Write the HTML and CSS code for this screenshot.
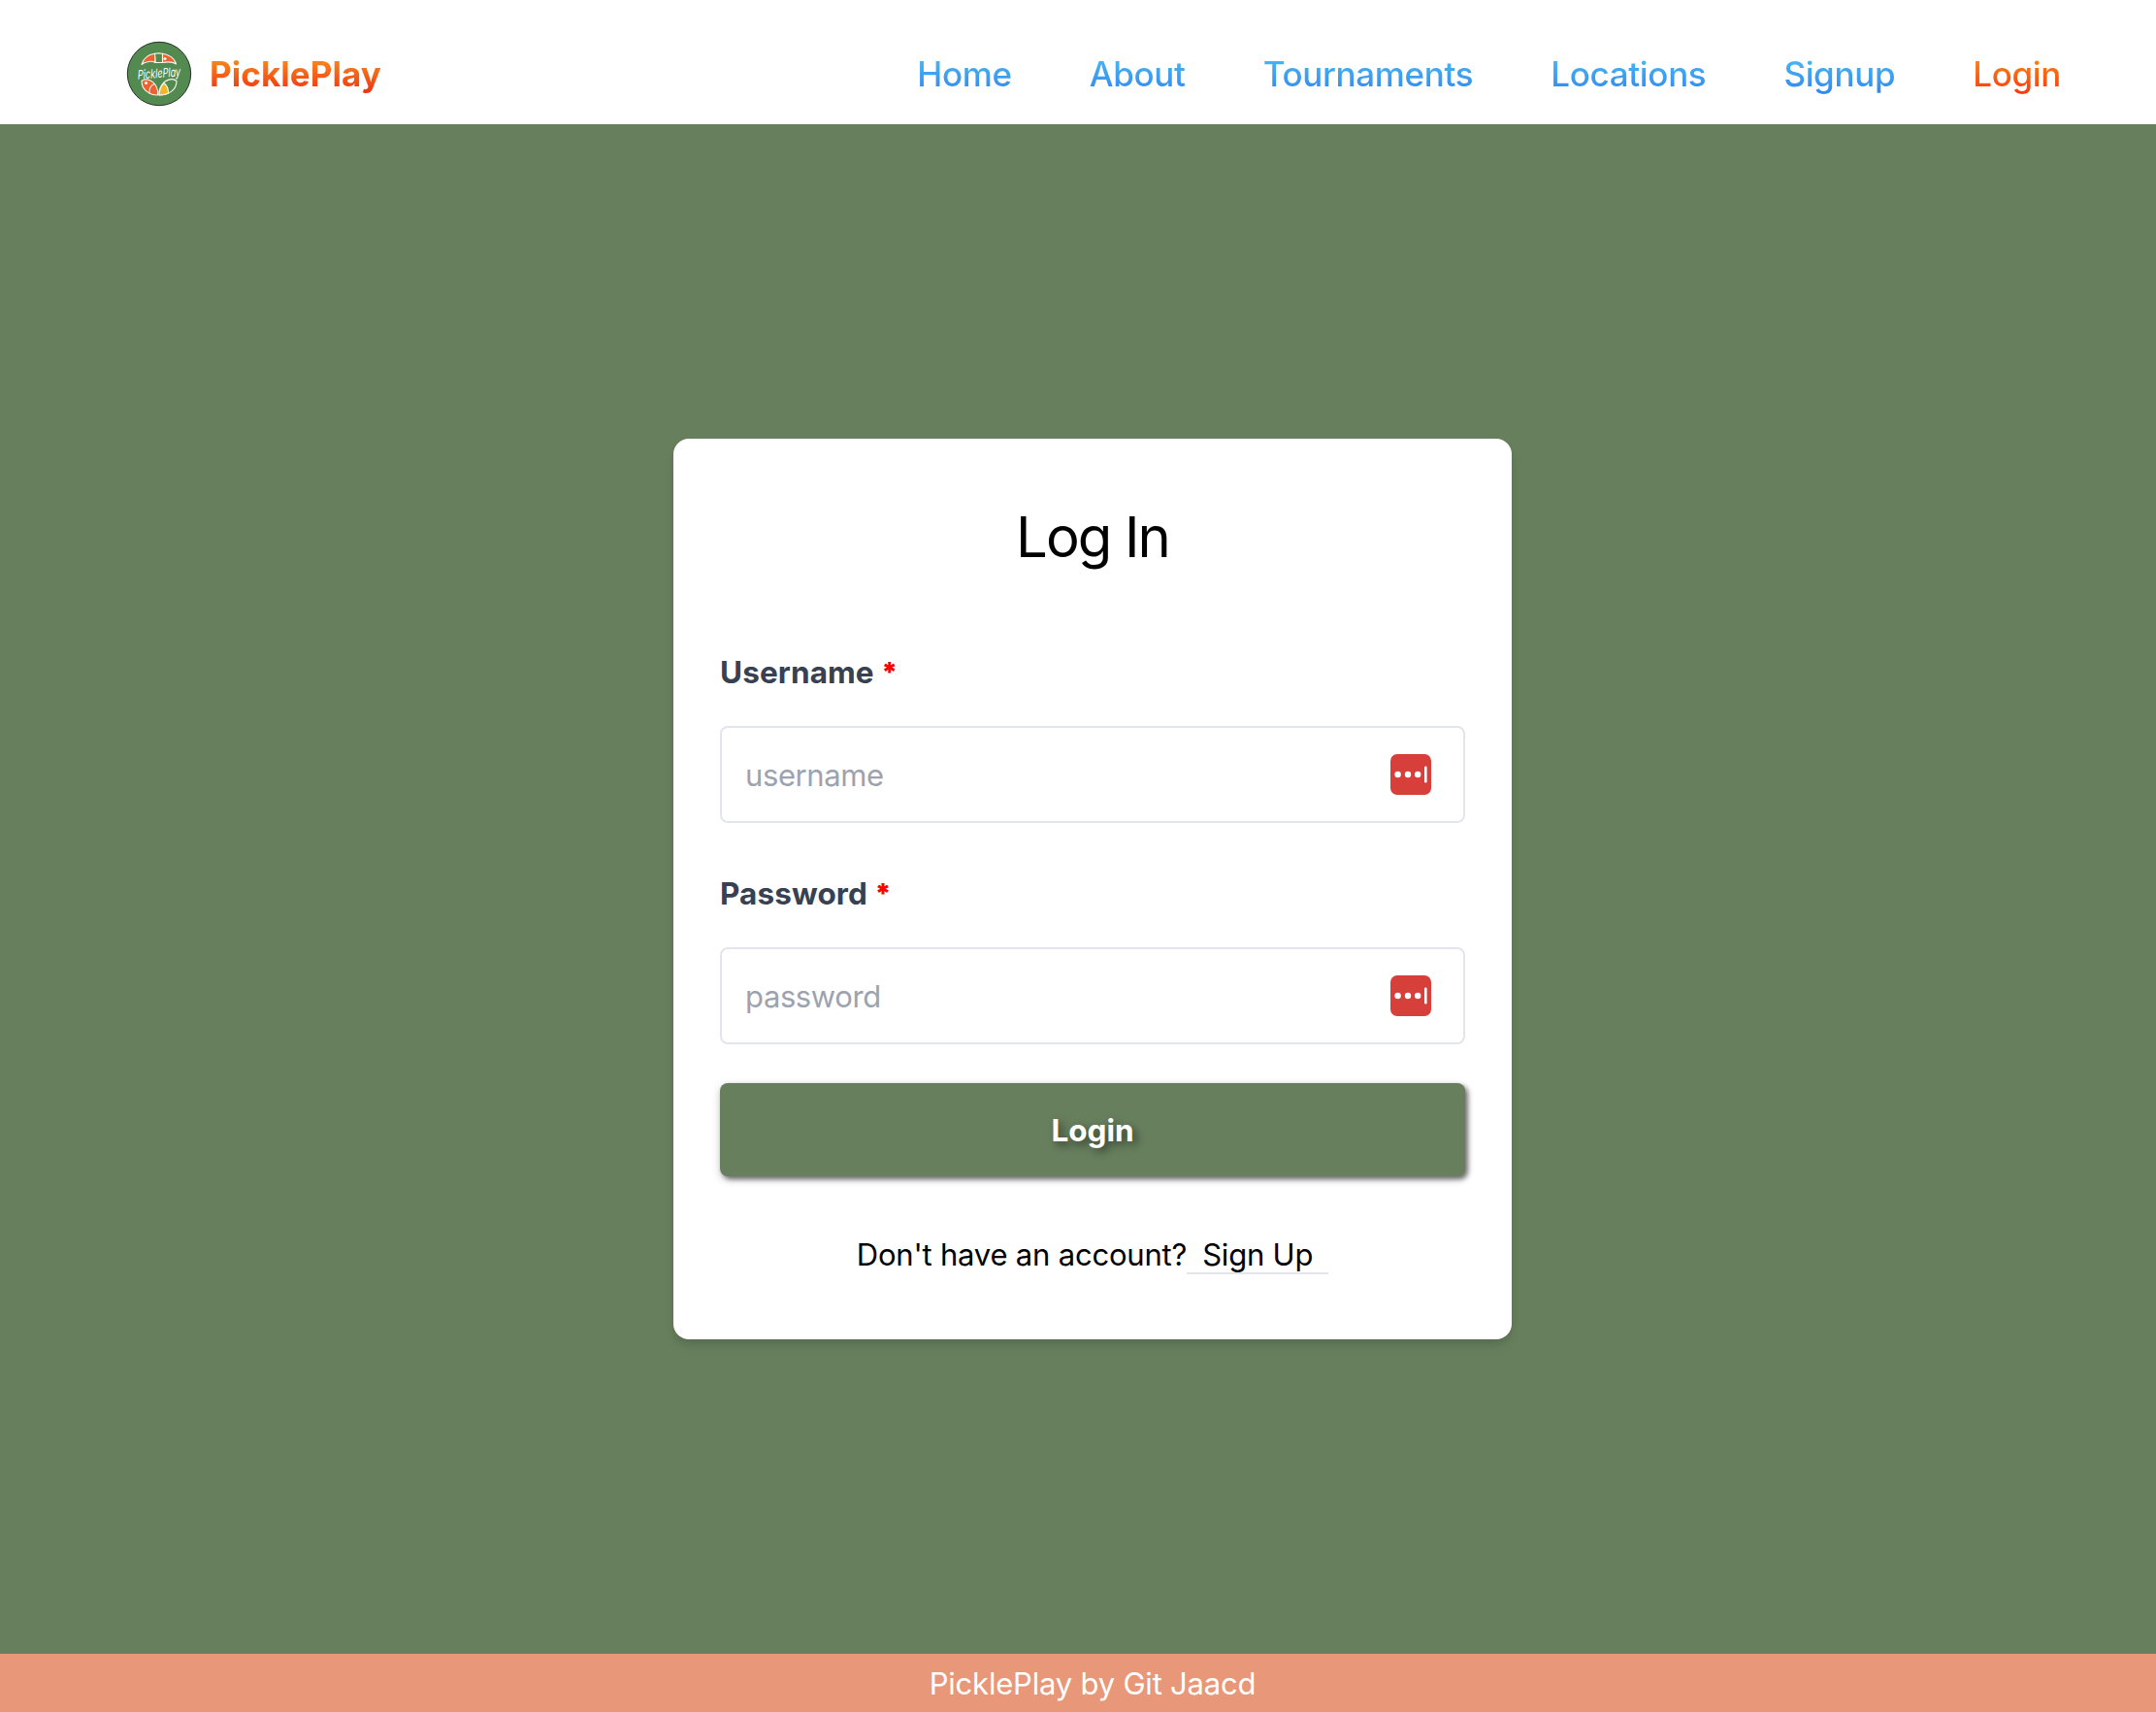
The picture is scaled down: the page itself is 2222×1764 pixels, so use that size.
FILE: index.html
```html
<!DOCTYPE html>
<html lang="en">
<head>
<meta charset="utf-8">
<title>PicklePlay - Log In</title>
<link rel="stylesheet" href="styles.css">
</head>
<body>
<header class="header">
  <a class="brand" href="#">
    <svg class="brand-logo" viewBox="0 0 68 68" aria-hidden="true">
      <circle cx="34" cy="34" r="32.7" fill="#538a50" stroke="#26322a" stroke-width="1"/>
      <g fill="none" stroke="#f4f7ee" stroke-width="1.1" stroke-linejoin="round" stroke-linecap="round">
        <path d="M16 24.500C18 17 24 14 29.500 13.200L30 22.500C27 20.500 20 21 16 24.500Z" fill="#f1602f"/>
        <path d="M37.500 13.200C44 14 50 18 51.500 24C48 21.500 43 21.500 37.500 22.500Z" fill="#f1602f"/>
        <path d="M29.500 13.200Q33.500 12.500 37.500 13.200V22.500H30Z"/>
        <path d="M16 41.500C19 38.500 27 39.500 31 47C33 51 33 53 32.500 56C23 56 16 50 16 41.500Z" fill="#f1602f"/>
        <path d="M24 54Q23.500 46 29.500 44.500"/>
        <path d="M52 41.500C48 38 40 39.500 36 47C34 51 33.500 53 34 56C45 56 52 50 52 41.500Z"/>
        <path d="M34 56C34 50 36 46.500 39 43.500Q43.500 47 43.500 54Q39 56 34 56Z" fill="#f5b52b"/>
      </g>
      <circle cx="20.500" cy="43.500" r="1.600" fill="#fff"/>
      <circle cx="40" cy="18.500" r="1.500" fill="#fff"/>
      <text class="logo-script" x="34" y="38" text-anchor="middle" transform="translate(34 0) scale(.7 1) rotate(-3 0 34) translate(-34 0)">PicklePlay</text>
    </svg>
    <span class="brand-name">PicklePlay</span>
  </a>
  <nav class="nav">
    <a class="nav-link" href="#">Home</a>
    <a class="nav-link" href="#">About</a>
    <a class="nav-link" href="#">Tournaments</a>
    <a class="nav-link" href="#">Locations</a>
    <a class="nav-link" href="#">Signup</a>
    <a class="nav-link nav-link-active" href="#">Login</a>
  </nav>
</header>
<main class="main">
  <form class="card">
    <h1 class="title">Log In</h1>
    <label class="label" for="username">Username <span class="required">*</span></label>
    <div class="field">
      <input class="input" id="username" type="text" placeholder="username">
      <svg class="vault" viewBox="0 0 42 42" aria-hidden="true"><rect width="42" height="42" rx="7" fill="#d73f3a"/><g fill="#fff"><circle cx="7.600" cy="21" r="3.200"/><circle cx="18" cy="21" r="3.200"/><circle cx="28.200" cy="21" r="3.200"/><rect x="35" y="12.500" width="2.600" height="17" rx="1.200"/></g></svg>
    </div>
    <label class="label" for="password">Password <span class="required">*</span></label>
    <div class="field">
      <input class="input" id="password" type="password" placeholder="password">
      <svg class="vault" viewBox="0 0 42 42" aria-hidden="true"><rect width="42" height="42" rx="7" fill="#d73f3a"/><g fill="#fff"><circle cx="7.600" cy="21" r="3.200"/><circle cx="18" cy="21" r="3.200"/><circle cx="28.200" cy="21" r="3.200"/><rect x="35" y="12.500" width="2.600" height="17" rx="1.200"/></g></svg>
    </div>
    <button class="submit" type="button">Login</button>
    <p class="signup">Don't have an account?<a class="signup-link" href="#">Sign Up</a></p>
  </form>
</main>
<footer class="footer">PicklePlay by Git Jaacd</footer>
</body>
</html>
```
FILE: styles.css
```css
* { box-sizing: border-box; }
body {
  margin: 0;
  height: 1764px;
  display: flex;
  flex-direction: column;
  background: #677f5d;
  font-family: Inter, "Liberation Sans", sans-serif;
  font-size: 31px;
  line-height: 48px;
  letter-spacing: -0.2px;
  color: #000;
}
a { color: inherit; text-decoration: none; }
.header {
  height: 128px;
  padding: 24px 98px 0 130px;
  display: flex;
  align-items: center;
  justify-content: space-between;
  background: #fff;
}
.brand { display: flex; align-items: center; gap: 18px; }
.brand-logo { width: 68px; height: 68px; margin-top: -1px; overflow: visible; }
.logo-script { font: italic 400 13px Inter, sans-serif; fill: #fff; letter-spacing: 0; }
.brand-name {
  font-size: 35px;
  font-weight: 700;
  line-height: 56px;
  letter-spacing: 0.05px;
  background: linear-gradient(#fbab1e, #f01c10);
  -webkit-background-clip: text;
  background-clip: text;
  color: transparent;
}
.nav { display: flex; gap: 80px; }
.nav-link {
  font-size: 35px;
  font-weight: 500;
  line-height: 56px;
  letter-spacing: -0.34px;
  background: linear-gradient(#4fc8f0, #2f7cf0);
  -webkit-background-clip: text;
  background-clip: text;
  color: transparent;
}
.nav-link-active { background-image: linear-gradient(#fb9e16, #f52c10); }
.main {
  flex: 1;
  padding-left: 30px;
  display: flex;
  align-items: center;
  justify-content: center;
}
.card {
  width: 864px;
  height: 928px;
  padding: 65px 48px 0;
  display: flex;
  flex-direction: column;
  background: #fff;
  border-radius: 16px;
  box-shadow: 0 8px 12px -2px rgba(0,0,0,.1), 0 4px 8px -2px rgba(0,0,0,.08);
}
.title {
  margin: 0 0 80px;
  font-size: 58px;
  font-weight: 400;
  line-height: 72px;
  letter-spacing: -1.9px;
  text-align: center;
}
.label {
  margin-bottom: 31px;
  color: #374151;
  font-size: 31.5px;
  font-weight: 700;
  letter-spacing: 0.1px;
}
.required { color: #f00; font-size: 28px; font-weight: 900; line-height: 1; vertical-align: 1px; }
.field { position: relative; height: 100px; margin-bottom: 49px; }
.input {
  width: 100%;
  height: 100px;
  padding: 1px 24px 0;
  border: 2px solid #e2e6ea;
  border-radius: 8px;
  font: inherit;
  letter-spacing: -0.4px;
  background: #fff;
}
.input::placeholder { color: #9ca3af; opacity: 1; }
.vault { position: absolute; right: 35px; top: 29px; width: 42px; height: 42px; }
.submit {
  margin: -9px 0 57px;
  height: 96px;
  padding: 1px 0 0;
  border: 0;
  border-radius: 8px;
  background: #677f5d;
  color: #fff;
  font: inherit;
  font-size: 31.5px;
  font-weight: 700;
  text-shadow: 4px 4px 8px rgba(0,0,0,.5);
  box-shadow: 0 3px 10px rgba(0,0,0,.2), 3px 3px 5px rgba(0,0,0,.5);
}
.signup { margin: 0; text-align: center; }
.signup-link { padding: 0 16px; border-bottom: 2px solid #e2e6ea; }
.footer {
  height: 60px;
  padding: 7px 0 0 30px;
  text-align: center;
  background: #e89778;
  color: #fff;
}
```
